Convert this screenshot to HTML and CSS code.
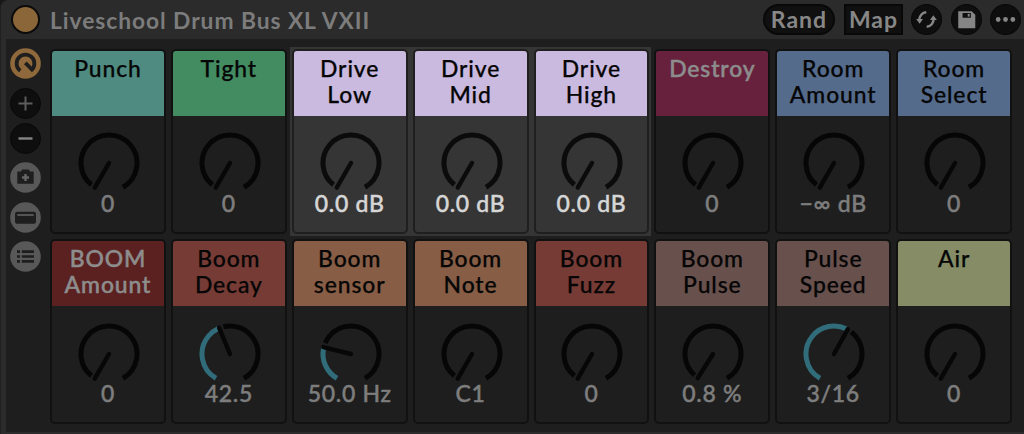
FILE: index.html
```html
<!DOCTYPE html>
<html lang="en">
<head>
    <meta charset="UTF-8">
    <meta name="viewport" content="width=device-width, initial-scale=1.0">
    <title>Liveschool Drum Bus XL VXII</title>
    <link rel="stylesheet" href="styles.css">
    <script src="rack.js" defer></script>
</head>
<body>
    <div class="rack">
        <header class="topbar">
            <span class="power"></span>
            <h1 class="title">Liveschool Drum Bus XL VXII</h1>
            <button class="btn rand">Rand</button>
            <button class="btn map">Map</button>
            <svg class="round swap" viewBox="0 0 30 30">
                <circle class="dark" cx="15" cy="15" r="14.5"/>
                <path class="line" d="M8.2 15.5A7 7 0 0 1 14.8 8M21.8 14.5A7 7 0 0 1 15.2 22"/>
                <path class="solid" d="M5 14.6h6.6l-3.2 4.6zM25 15.4h-6.6l3.2-4.6z"/>
            </svg>
            <svg class="round save" viewBox="0 0 30 30">
                <circle class="dark" cx="15" cy="15" r="14.5"/>
                <path class="solid" fill-rule="evenodd" d="M7 7h13l3.5 3.5v13H7zM11.2 8.8v4.4h8V8.8z"/>
                <path class="solid" d="M16.2 9.5h1.9v2.7h-1.9z"/>
            </svg>
            <svg class="round more" viewBox="0 0 30 30">
                <circle class="dark" cx="15" cy="15" r="14.5"/>
                <circle class="solid" cx="7.9" cy="15" r="2.3"/>
                <circle class="solid" cx="15" cy="15" r="2.3"/>
                <circle class="solid" cx="22.1" cy="15" r="2.3"/>
            </svg>
        </header>

        <main class="body">
            <nav class="rail">
                <svg class="round" viewBox="0 0 31 31">
                    <circle class="amber" cx="15.5" cy="15.5" r="15.3"/>
                    <path class="cut" d="M10.3 22.7A8.9 8.9 0 1 1 20.7 22.7"/>
                    <path class="cut" d="M15.3 14.8L22.5 22"/>
                </svg>
                <svg class="round plus" viewBox="0 0 31 31">
                    <circle class="dark" cx="15.5" cy="15.5" r="15"/>
                    <path class="thin" d="M8.5 15.5h14M15.5 8.5v14"/>
                </svg>
                <svg class="round minus" viewBox="0 0 31 31">
                    <circle class="dark" cx="15.5" cy="15.5" r="15"/>
                    <path class="bar" d="M8.5 15.5h14"/>
                </svg>
                <svg class="round" viewBox="0 0 31 31">
                    <circle class="grey" cx="15.5" cy="15.5" r="15.3"/>
                    <path class="hole" d="M7.3 9.5h3.6l1.4-2h6.4l1.4 2h3.6v12.2H7.3z"/>
                    <path class="mark" d="M12 15.5h7M15.5 12v7"/>
                </svg>
                <svg class="round" viewBox="0 0 31 31">
                    <circle class="grey" cx="15.5" cy="15.5" r="15.3"/>
                    <rect class="hole" x="5" y="9.7" width="21" height="12" rx="2"/>
                    <path class="slot" d="M7.3 13h16.4"/>
                </svg>
                <svg class="round" viewBox="0 0 31 31">
                    <circle class="grey" cx="15.5" cy="15.5" r="15.3"/>
                    <path class="rows" d="M7 10.6h3M11.8 10.6h12.2M7 15.5h3M11.8 15.5h12.2M7 20.4h3M11.8 20.4h12.2"/>
                </svg>
            </nav>
            <section class="macros" id="macros"></section>
        </main>
    </div>
</body>
</html>
```
FILE: styles.css
```css
* { box-sizing: border-box; }
body { margin: 0; background: #181818; font-family: Lato, "Liberation Sans", sans-serif; overflow: hidden; }

.rack { height: 434px; background: #2b2b2b; border-top-left-radius: 8px; border-left: 1px solid #202020; padding-left: 5px; display: flex; flex-direction: column; }

/* top bar */
.topbar { height: 39px; padding: 0 3px 0 5px; display: flex; align-items: center; flex: none; }
.power { width: 29px; height: 29px; border-radius: 50%; background: #8a6638; border: 2px solid #0c0c0c; }
.title { margin: 0 auto 0 10px; font-size: 22.8px; line-height: 30px; font-weight: 700; letter-spacing: 0.94px; color: #7c7c7c; white-space: nowrap; }
.btn { height: 31px; border: 2px solid #080808; background: #101010; color: #878787; font: 700 23px/25px Lato, "Liberation Sans", sans-serif; padding: 0; letter-spacing: 1px; }
.rand { width: 72px; border-radius: 16px; }
.map { width: 59px; margin-left: 9px; }
.round { width: 31px; height: 31px; display: block; flex: none; }
.swap { margin-left: 8px; }
.save { margin-left: 9px; }
.more { margin-left: 8px; }

.dark { fill: #0e0e0e; stroke: #090909; stroke-width: 1; }
.solid { fill: #858585; }
.line { fill: none; stroke: #858585; stroke-width: 2.4; }

/* device body */
.body { height: 393px; background: #1e1e1e; display: flex; }
.rail { width: 44px; padding: 9px 0 0 4px; display: flex; flex-direction: column; gap: 8.5px; }
.plus { margin-bottom: -4.5px; }
.amber { fill: #8f693b; }
.cut { fill: none; stroke: #1e1e1e; stroke-width: 3.8; }
.thin { fill: none; stroke: #5d5d5d; stroke-width: 2; }
.bar { fill: none; stroke: #858585; stroke-width: 2.4; }
.grey { fill: #585858; }
.hole { fill: #1e1e1e; }
.mark { fill: none; stroke: #666; stroke-width: 2.4; }
.slot { fill: none; stroke: #5b5b5b; stroke-width: 1.8; }
.rows { fill: none; stroke: #1e1e1e; stroke-width: 2.6; }

/* macro grid */
.macros { width: 962px; padding-top: 10px; display: grid; grid-template-columns: repeat(8, minmax(0, 1fr)); grid-template-rows: 185px 185px; gap: 5.3px 5px; }
.group { grid-column: span 3; margin: -2px; padding: 2px; background: #353535; display: grid; grid-template-columns: repeat(3, minmax(0, 1fr)); gap: 5px; }
.macro { border: 2px solid #111; border-radius: 5px; background: #1e1e1e; overflow: hidden; display: flex; flex-direction: column; align-items: center; }
.name { width: 100%; height: 65px; padding-top: 5px; color: #060606; font-size: 22.9px; line-height: 25.6px; font-weight: 500; text-align: center; letter-spacing: 0.9px; -webkit-text-stroke: 0.25px currentColor; flex: none; white-space: pre-line; }
.light .name { color: #8d8d8d; -webkit-text-stroke-width: 0.5px; }
.knob { width: 64px; height: 64px; margin: 15.4px 0 0 2px; flex: none; }
.value { margin-top: -5.4px; color: #7d7d7d; font-size: 23px; line-height: 26px; font-weight: 500; letter-spacing: 0.7px; -webkit-text-stroke: 0.45px currentColor; white-space: nowrap; }

.group .macro { background: #353535; border-color: #1f1f1f; }
.group .value { color: #d6d6d6; }
.group .track, .group .hand { stroke: #0b0b0b; }

.track { fill: none; stroke: #060606; stroke-width: 5; }
.fill { fill: none; stroke: #306c7a; stroke-width: 5; }
.hand { stroke: #070707; stroke-width: 4.4; stroke-linecap: round; }

.teal { background: #4f8b80; }
.green { background: #438b60; }
.lilac { background: #cabae0; }
.wine { background: #67213d; }
.blue { background: #556b8b; }
.crimson { background: #5b2020; }
.red { background: #773b35; }
.orange { background: #875d45; }
.mauve { background: #68504c; }
.olive { background: #858c66; }
```
FILE: rack.js
```javascript
// turn is the knob position in degrees, 0 to 300
const macros = [
    { name: 'Punch', color: 'teal', value: '0', turn: 0 },
    { name: 'Tight', color: 'green', value: '0', turn: 0 },
    { group: [
        { name: 'Drive\nLow', color: 'lilac', value: '0.0 dB', turn: 0 },
        { name: 'Drive\nMid', color: 'lilac', value: '0.0 dB', turn: 0 },
        { name: 'Drive\nHigh', color: 'lilac', value: '0.0 dB', turn: 0 }
    ] },
    { name: 'Destroy', color: 'wine', value: '0', turn: 0, light: true },
    { name: 'Room\nAmount', color: 'blue', value: '−∞ dB', turn: 0 },
    { name: 'Room\nSelect', color: 'blue', value: '0', turn: 0 },
    { name: 'BOOM\nAmount', color: 'crimson', value: '0', turn: 0, light: true },
    { name: 'Boom\nDecay', color: 'red', value: '42.5', turn: 127.5 },
    { name: 'Boom\nsensor', color: 'orange', value: '50.0 Hz', turn: 74 },
    { name: 'Boom\nNote', color: 'orange', value: 'C1', turn: 0 },
    { name: 'Boom\nFuzz', color: 'red', value: '0', turn: 0 },
    { name: 'Boom\nPulse', color: 'mauve', value: '0.8 %', turn: 2.4 },
    { name: 'Pulse\nSpeed', color: 'mauve', value: '3/16', turn: 179 },
    { name: 'Air', color: 'olive', value: '0', turn: 0 }
];

const arc = 'M18 56.25A28 28 0 1 1 46 56.25';

function knob(turn) {
    const start = turn + 9;
    const fill = turn > 10 ? `<path class="fill" d="${arc}" pathLength="300" stroke-dasharray="${turn - 2} 400"/>` : '';
    return `<svg class="knob" viewBox="0 0 64 64">
        <path class="track" d="${arc}" pathLength="300" stroke-dasharray="0 ${start} ${300 - start} 400"/>
        ${fill}
        <path class="hand" d="M32 32V3.5" transform="rotate(${turn - 150} 32 32)"/>
    </svg>`;
}

function macro(m) {
    if (m.group) {
        return `<div class="group">${m.group.map(macro).join('')}</div>`;
    }
    return `<div class="macro ${m.light ? 'light' : ''}">
        <div class="name ${m.color}">${m.name}</div>
        ${knob(m.turn)}
        <div class="value">${m.value}</div>
    </div>`;
}

document.getElementById('macros').innerHTML = macros.map(macro).join('');
```
